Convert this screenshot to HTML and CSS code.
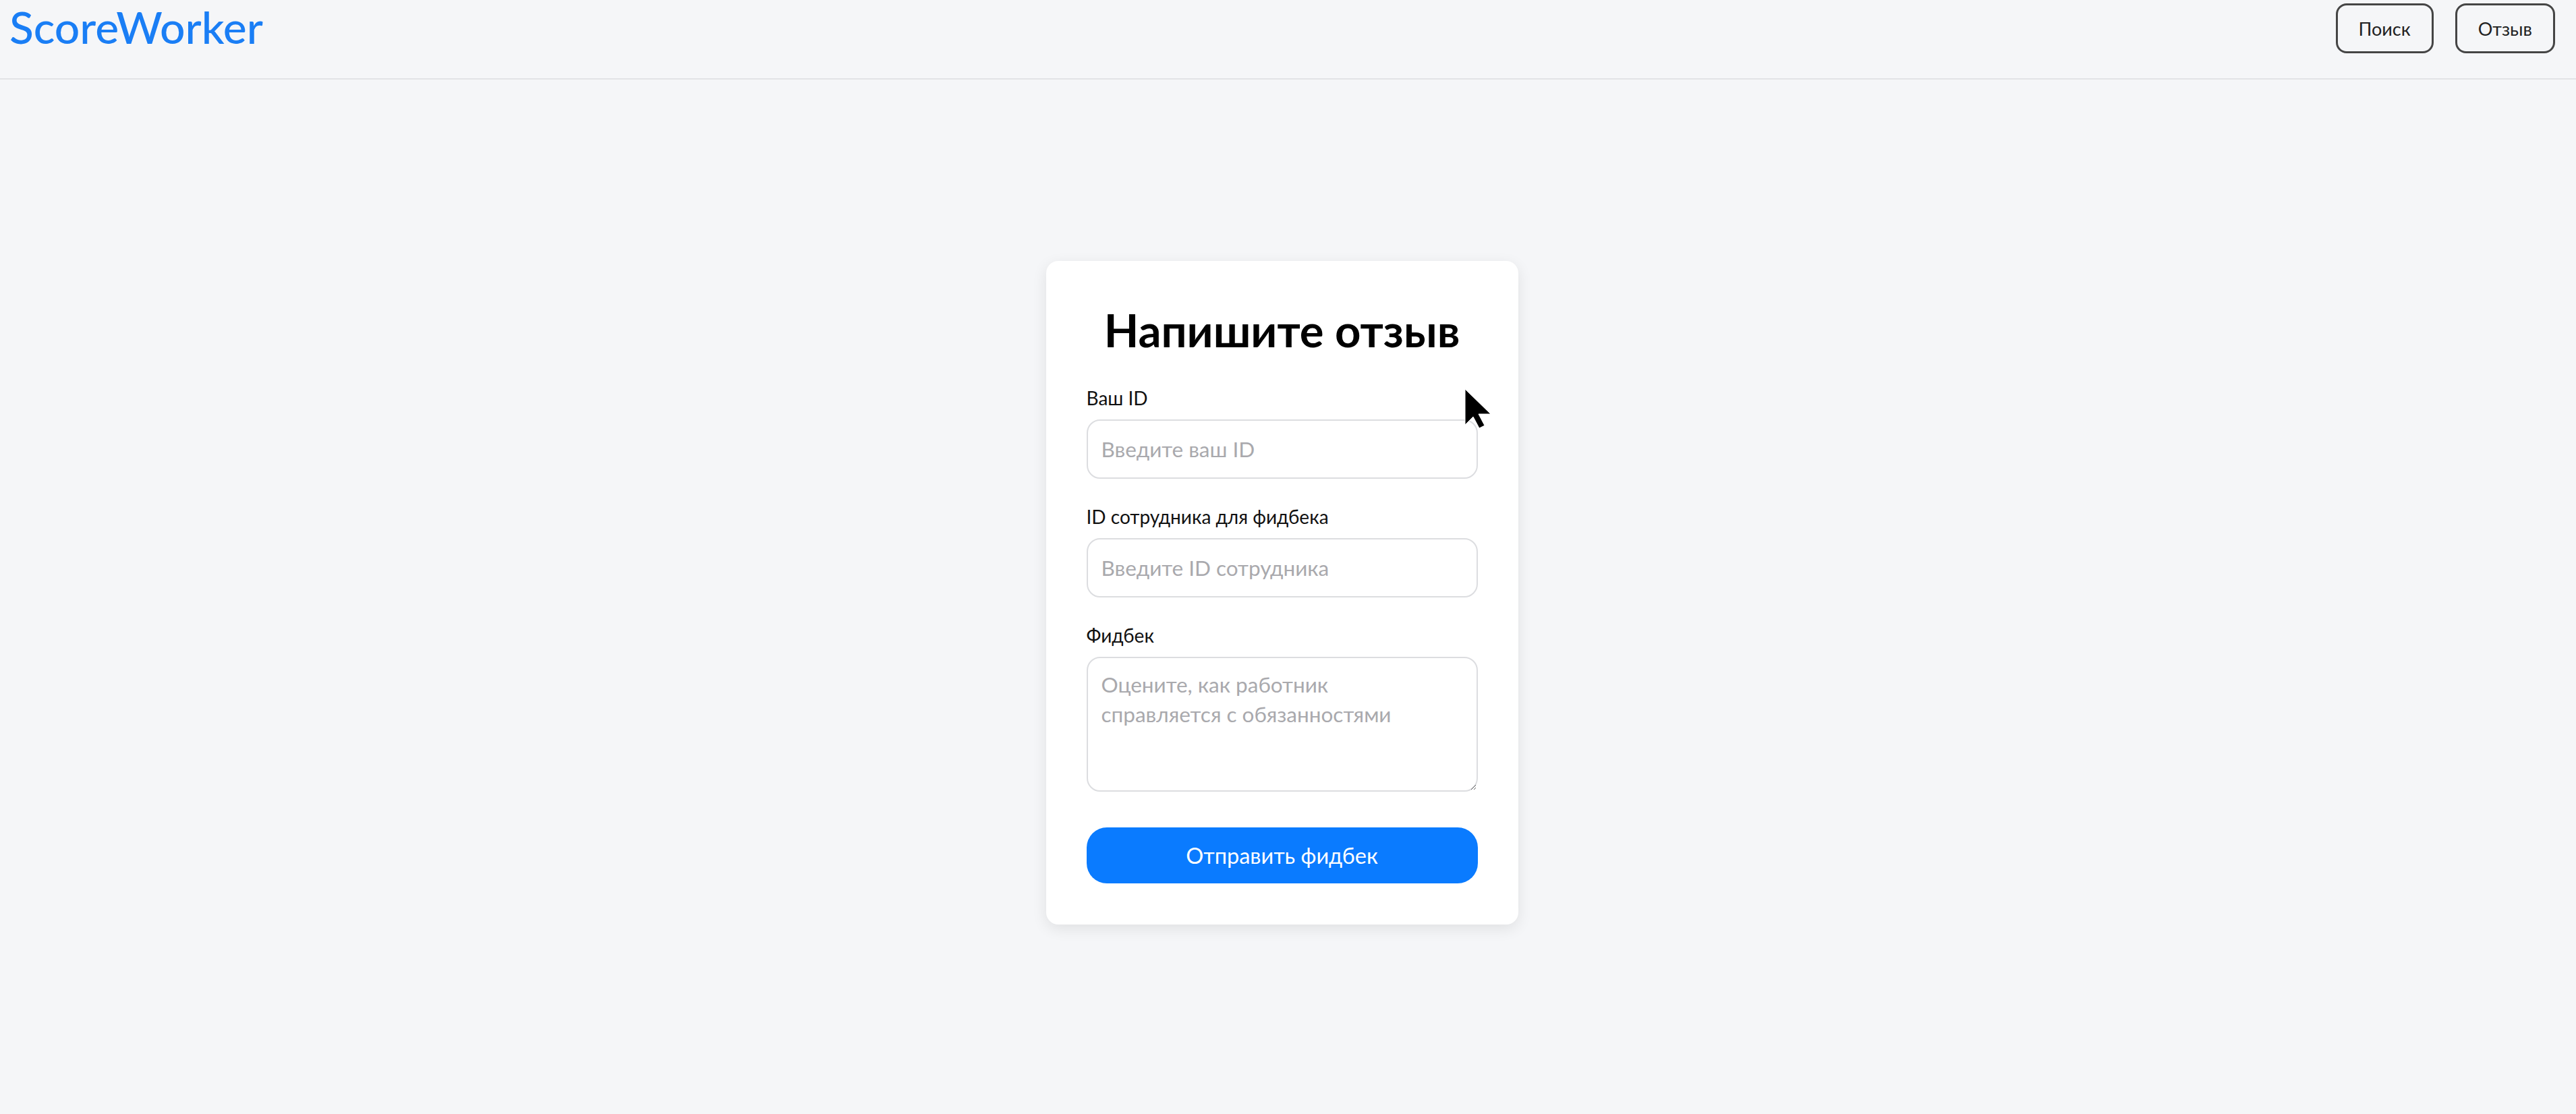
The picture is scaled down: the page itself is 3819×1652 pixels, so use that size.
FILE: index.html
```html
<!DOCTYPE html>
<html lang="ru">
<head>
<meta charset="utf-8">
<title>ScoreWorker</title>
<link rel="stylesheet" href="styles.css">
</head>
<body>
<header class="topbar">
  <div class="logo">ScoreWorker</div>
  <nav class="nav">
    <button class="nav-btn">Поиск</button>
    <button class="nav-btn">Отзыв</button>
  </nav>
</header>
<main class="page">
  <form class="card">
    <h1 class="card-title">Напишите отзыв</h1>
    <div class="field">
      <label class="field-label">Ваш ID</label>
      <input class="field-input" type="text" placeholder="Введите ваш ID">
    </div>
    <div class="field">
      <label class="field-label">ID сотрудника для фидбека</label>
      <input class="field-input" type="text" placeholder="Введите ID сотрудника">
    </div>
    <div class="field field-last">
      <label class="field-label">Фидбек</label>
      <textarea class="field-input field-area" placeholder="Оцените, как работник справляется с обязанностями"></textarea>
    </div>
    <button type="button" class="submit">Отправить фидбек</button>
  </form>
</main>
<svg class="cursor" width="42" height="60" viewBox="0 0 42 60" xmlns="http://www.w3.org/2000/svg">
  <path d="M1 1 L1 54 L13 42 L22 59 L30 55 L21 38 L39 38 Z" fill="#000" stroke="#fff" stroke-width="1"/>
</svg>
</body>
</html>
```
FILE: styles.css
```css
* { box-sizing: border-box; }
html, body { margin: 0; padding: 0; }
body {
  background: #f5f6f8;
  font-family: "Lato", "Noto Sans", sans-serif;
  color: #111;
  min-height: 1652px;
  overflow: hidden;
}
.topbar {
  height: 118px;
  border-bottom: 2px solid #e2e3e6;
  display: flex;
  justify-content: space-between;
  align-items: flex-start;
  padding: 0 31px 0 14px;
}
.logo {
  font-size: 66px;
  line-height: 80px;
  color: #1a7ef5;
  font-weight: 500;
}
.nav {
  display: flex;
  gap: 32px;
  padding-top: 5px;
}
.nav-btn {
  height: 74px;
  padding: 0 31px;
  background: transparent;
  border: 3px solid #454545;
  border-radius: 16px;
  font-family: inherit;
  font-size: 27px;
  color: #222;
}
.page {
  height: 1534px;
  display: flex;
  justify-content: center;
  align-items: flex-start;
  padding-top: 269px;
  padding-right: 18px;
}
.card {
  width: 700px;
  background: #fff;
  border-radius: 18px;
  box-shadow: 0 6px 22px rgba(0, 0, 0, 0.09);
  padding: 58px 60px 61px;
  display: flex;
  flex-direction: column;
}
.card-title {
  margin: 0 0 40px;
  text-align: center;
  font-size: 67px;
  line-height: 88px;
  font-weight: 700;
  color: #000;
}
.field {
  display: flex;
  flex-direction: column;
  margin-bottom: 39px;
}
.field-label {
  font-size: 28px;
  line-height: 34px;
  margin-bottom: 15px;
  color: #111;
}
.field-input {
  height: 88px;
  width: 100%;
  border: 2px solid #dcdde0;
  border-radius: 20px;
  padding: 0 20px;
  font-family: inherit;
  font-size: 31.5px;
  color: #222;
  background: #fff;
  outline: none;
}
.field-input::placeholder { color: #a9a9ad; }
.field-area {
  height: 200px;
  padding: 17px 96px 17px 20px;
  line-height: 44px;
  resize: vertical;
  display: block;
}
.field-last { margin-bottom: 53px; }
.submit {
  height: 83px;
  width: 100%;
  border: none;
  border-radius: 30px;
  background: #0a7bff;
  color: #fff;
  font-family: inherit;
  font-size: 32.5px;
}
.cursor {
  position: absolute;
  left: 2171px;
  top: 576px;
}
```
